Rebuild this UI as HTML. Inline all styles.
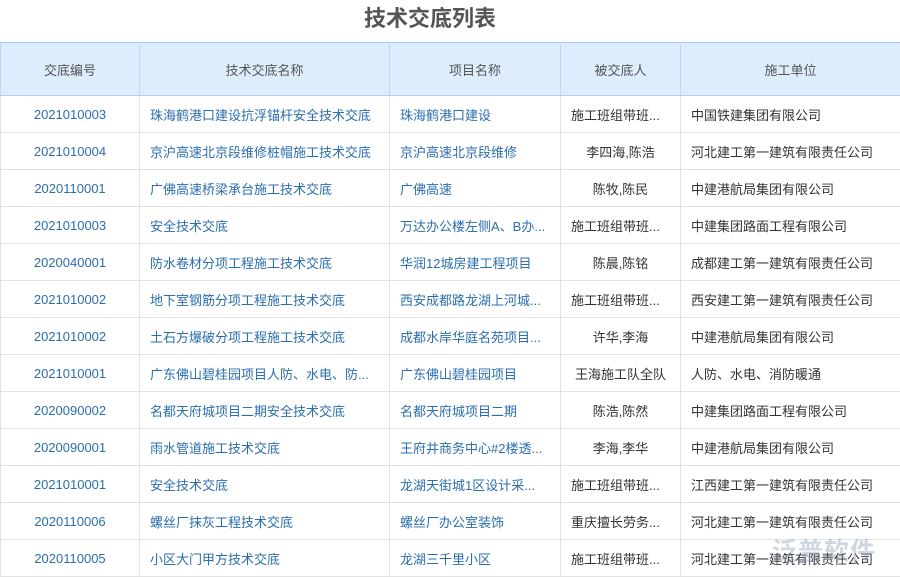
<!DOCTYPE html>
<html><head><meta charset="utf-8"><style>
body{margin:0;width:900px;height:577px;overflow:hidden;background:#fff;font-family:"Liberation Sans","Noto Sans CJK SC",sans-serif;position:relative}
h1{margin:0;position:absolute;top:4px;left:0;width:860px;text-align:center;font-size:22px;font-weight:bold;color:#555;line-height:30px}
table{position:absolute;top:42px;left:0;border-collapse:collapse;table-layout:fixed;width:900px;font-size:13px}
th{height:52px;padding:0;background:#deedfb;color:#555;font-weight:normal;border:1px solid #c4d9ec;border-top:1px solid #a9c8e2;border-bottom:1px solid #b5cfe6}
td{height:36px;border:1px solid #e3e3e3;color:#333;padding:0;white-space:nowrap;overflow:hidden}
td.c{text-align:center}
td.l{padding-left:10px}
.b{color:#2b6eae}
.wm{position:absolute;left:772px;top:532px;font-size:25px;color:rgba(120,140,170,.35);font-weight:bold;letter-spacing:1px}
</style></head><body>
<h1>技术交底列表</h1>
<table>
<colgroup><col style="width:139px"><col style="width:250px"><col style="width:171px"><col style="width:120px"><col style="width:220px"></colgroup>
<tr><th>交底编号</th><th>技术交底名称</th><th>项目名称</th><th>被交底人</th><th>施工单位</th></tr>
<tr><td class="c b">2021010003</td><td class="l b">珠海鹤港口建设抗浮锚杆安全技术交底</td><td class="l b">珠海鹤港口建设</td><td class="l">施工班组带班...</td><td class="l">中国铁建集团有限公司</td></tr>
<tr><td class="c b">2021010004</td><td class="l b">京沪高速北京段维修桩帽施工技术交底</td><td class="l b">京沪高速北京段维修</td><td class="c">李四海,陈浩</td><td class="l">河北建工第一建筑有限责任公司</td></tr>
<tr><td class="c b">2020110001</td><td class="l b">广佛高速桥梁承台施工技术交底</td><td class="l b">广佛高速</td><td class="c">陈牧,陈民</td><td class="l">中建港航局集团有限公司</td></tr>
<tr><td class="c b">2021010003</td><td class="l b">安全技术交底</td><td class="l b">万达办公楼左侧A、B办...</td><td class="l">施工班组带班...</td><td class="l">中建集团路面工程有限公司</td></tr>
<tr><td class="c b">2020040001</td><td class="l b">防水卷材分项工程施工技术交底</td><td class="l b">华润12城房建工程项目</td><td class="c">陈晨,陈铭</td><td class="l">成都建工第一建筑有限责任公司</td></tr>
<tr><td class="c b">2021010002</td><td class="l b">地下室钢筋分项工程施工技术交底</td><td class="l b">西安成都路龙湖上河城...</td><td class="l">施工班组带班...</td><td class="l">西安建工第一建筑有限责任公司</td></tr>
<tr><td class="c b">2021010002</td><td class="l b">土石方爆破分项工程施工技术交底</td><td class="l b">成都水岸华庭名苑项目...</td><td class="c">许华,李海</td><td class="l">中建港航局集团有限公司</td></tr>
<tr><td class="c b">2021010001</td><td class="l b">广东佛山碧桂园项目人防、水电、防...</td><td class="l b">广东佛山碧桂园项目</td><td class="c">王海施工队全队</td><td class="l">人防、水电、消防暖通</td></tr>
<tr><td class="c b">2020090002</td><td class="l b">名都天府城项目二期安全技术交底</td><td class="l b">名都天府城项目二期</td><td class="c">陈浩,陈然</td><td class="l">中建集团路面工程有限公司</td></tr>
<tr><td class="c b">2020090001</td><td class="l b">雨水管道施工技术交底</td><td class="l b">王府井商务中心#2楼透...</td><td class="c">李海,李华</td><td class="l">中建港航局集团有限公司</td></tr>
<tr><td class="c b">2021010001</td><td class="l b">安全技术交底</td><td class="l b">龙湖天街城1区设计采...</td><td class="l">施工班组带班...</td><td class="l">江西建工第一建筑有限责任公司</td></tr>
<tr><td class="c b">2020110006</td><td class="l b">螺丝厂抹灰工程技术交底</td><td class="l b">螺丝厂办公室装饰</td><td class="l">重庆擅长劳务...</td><td class="l">河北建工第一建筑有限责任公司</td></tr>
<tr><td class="c b">2020110005</td><td class="l b">小区大门甲方技术交底</td><td class="l b">龙湖三千里小区</td><td class="l">施工班组带班...</td><td class="l">河北建工第一建筑有限责任公司</td></tr>
</table>
<div class="wm">泛普软件</div>
</body></html>
